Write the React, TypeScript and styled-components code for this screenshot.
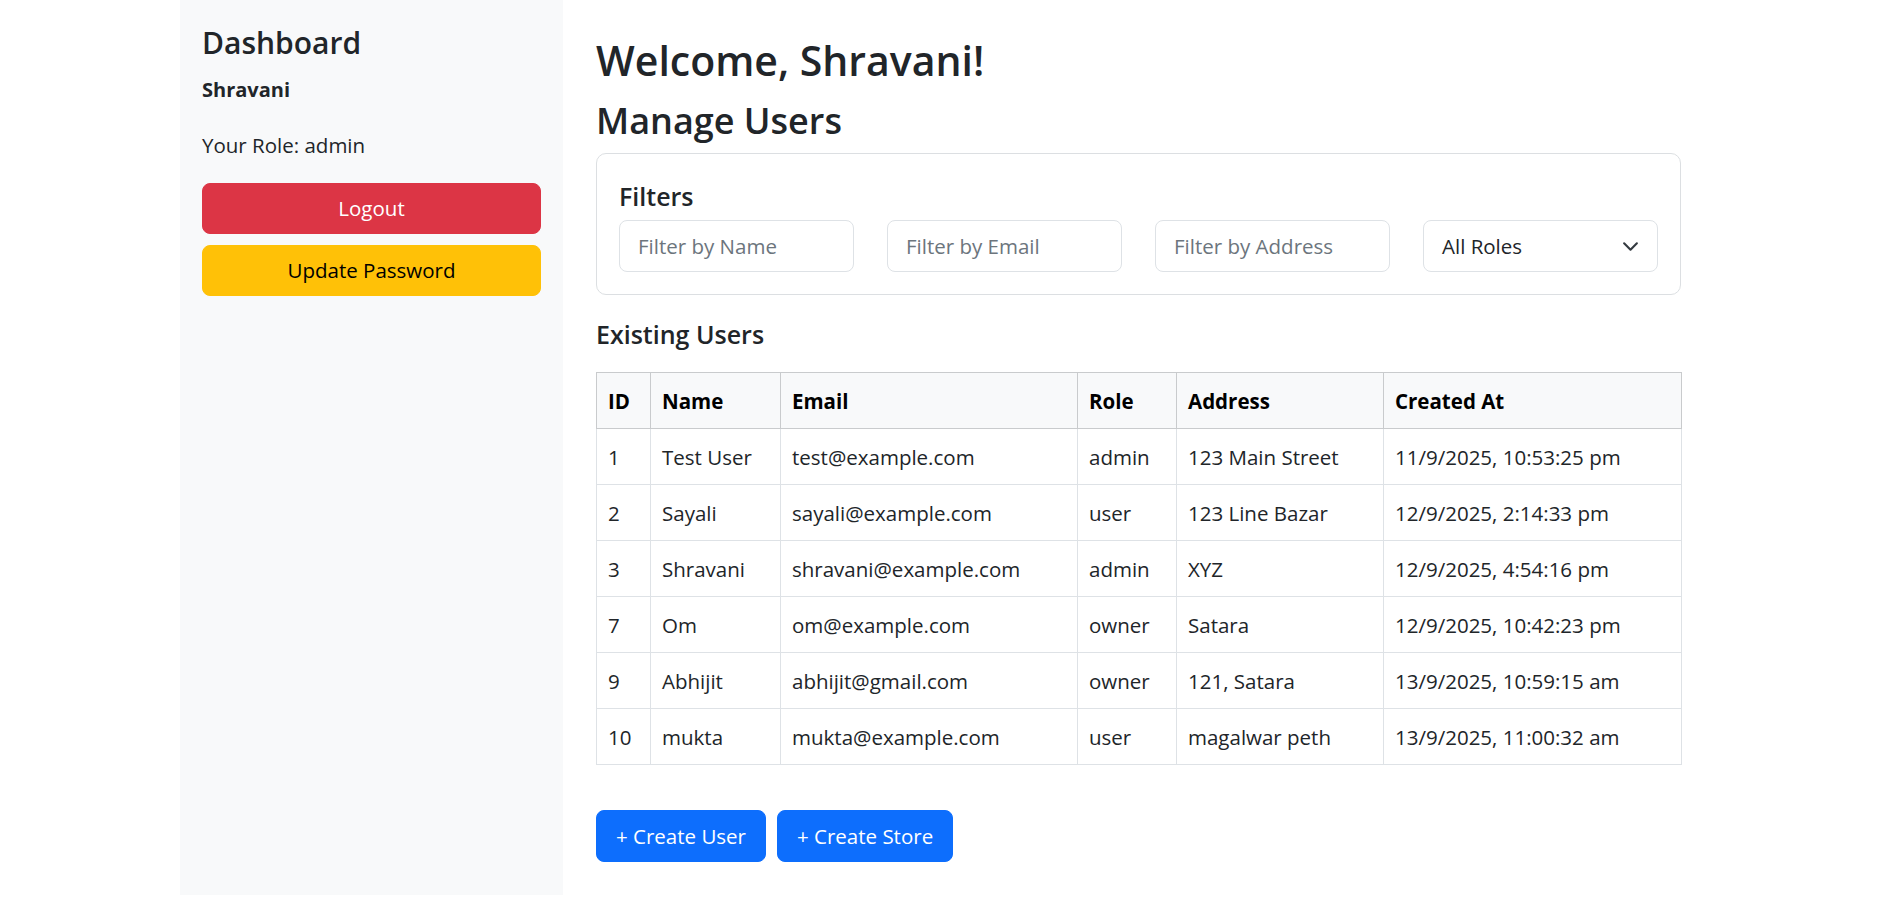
import React from "react";
import styled, { createGlobalStyle } from "styled-components";

const GlobalStyle = createGlobalStyle`
  * { box-sizing: border-box; }
  body {
    margin: 0;
    background: #fff;
    color: #212529;
    font-family: "Open Sans", "Noto Sans", Arial, sans-serif;
    font-size: 20.5px;
    line-height: 1.5;
  }
`;

const Page = styled.div`
  display: flex;
  align-items: stretch;
  padding-left: 180px;
`;

const Sidebar = styled.aside`
  width: 383px;
  flex: none;
  background: #f8f9fa;
  padding: 25px 22px;
  display: flex;
  flex-direction: column;
`;

const SideTitle = styled.h4`
  margin: 0 0 17px;
  font-size: 30px;
  font-weight: 600;
  line-height: 1.2;
`;

const SideUser = styled.h6`
  margin: 0 0 28px;
  font-size: 20px;
  font-weight: 700;
  line-height: 1.2;
`;

const SideRole = styled.p`
  margin: 0 0 22px;
`;

const Btn = styled.button<{ $variant: "danger" | "warning" | "primary" }>`
  font-family: inherit;
  font-size: 20.5px;
  line-height: 1.5;
  border: 1px solid transparent;
  border-radius: 8px;
  cursor: pointer;
  background: ${(p) =>
    p.$variant === "danger" ? "#dc3545" : p.$variant === "warning" ? "#ffc107" : "#0d6efd"};
  border-color: ${(p) =>
    p.$variant === "danger" ? "#dc3545" : p.$variant === "warning" ? "#ffc107" : "#0d6efd"};
  color: ${(p) => (p.$variant === "warning" ? "#000" : "#fff")};
`;

const SideButton = styled(Btn)`
  width: 100%;
  height: 51px;
  padding: 0 15px;
  & + & { margin-top: 11px; }
`;

const Main = styled.main`
  width: 1151px;
  flex: none;
  padding: 36px 33px 33px;
`;

const Welcome = styled.h2`
  margin: 0 0 14px;
  font-size: 41px;
  font-weight: 600;
  line-height: 1.2;
`;

const SectionTitle = styled.h3`
  margin: 0 0 11px;
  font-size: 36px;
  font-weight: 600;
  line-height: 1.2;
`;

const Card = styled.section`
  border: 1px solid #dcdfe2;
  border-radius: 10px;
  padding: 27px 22px 22px;
  background: #fff;
`;

const CardTitle = styled.h5`
  margin: 0 0 9px;
  font-size: 25px;
  font-weight: 600;
  line-height: 1.2;
`;

const FilterGrid = styled.div`
  display: grid;
  grid-template-columns: repeat(4, 1fr);
  column-gap: 33px;
`;

const Field = styled.input`
  width: 100%;
  height: 52px;
  border: 1px solid #dee2e6;
  border-radius: 8px;
  padding: 0 18px;
  font-family: inherit;
  font-size: 20.5px;
  color: #212529;
  background: #fff;
  outline: none;
  &::placeholder { color: #6c757d; }
`;

const SelectBox = styled.div`
  height: 52px;
  border: 1px solid #dee2e6;
  border-radius: 8px;
  padding: 0 18px;
  display: flex;
  align-items: center;
  justify-content: space-between;
  background: #fff;
  color: #212529;
`;

const SubTitle = styled.h5`
  margin: 24px 0 23px;
  font-size: 25px;
  font-weight: 600;
  line-height: 1.2;
`;

const Table = styled.table`
  width: 100%;
  border-collapse: collapse;
  table-layout: fixed;
`;

const Th = styled.th`
  background: #f8f9fa;
  color: #000;
  font-weight: 700;
  text-align: left;
  padding: 12px 11px;
  height: 56px;
  border: 1px solid #c9cbcd;
  line-height: 1.5;
`;

const Td = styled.td`
  padding: 12px 11px;
  height: 56px;
  border: 1px solid #dee2e6;
  color: #212529;
  white-space: nowrap;
  line-height: 1.5;
`;

const Actions = styled.div`
  display: flex;
  gap: 11px;
  margin-top: 45px;
`;

const ActionButton = styled(Btn)`
  height: 52px;
  padding: 0 19px;
`;

const Chevron = () => (
  <svg width="17" height="17" viewBox="0 0 16 16" fill="none">
    <path d="M2 5l6 6 6-6" stroke="#343a40" strokeWidth="2" strokeLinecap="round" strokeLinejoin="round" />
  </svg>
);

const users = [
  { id: 1, name: "Test User", email: "test@example.com", role: "admin", address: "123 Main Street", created: "11/9/2025, 10:53:25 pm" },
  { id: 2, name: "Sayali", email: "sayali@example.com", role: "user", address: "123 Line Bazar", created: "12/9/2025, 2:14:33 pm" },
  { id: 3, name: "Shravani", email: "shravani@example.com", role: "admin", address: "XYZ", created: "12/9/2025, 4:54:16 pm" },
  { id: 7, name: "Om", email: "om@example.com", role: "owner", address: "Satara", created: "12/9/2025, 10:42:23 pm" },
  { id: 9, name: "Abhijit", email: "abhijit@gmail.com", role: "owner", address: "121, Satara", created: "13/9/2025, 10:59:15 am" },
  { id: 10, name: "mukta", email: "mukta@example.com", role: "user", address: "magalwar peth", created: "13/9/2025, 11:00:32 am" },
];

const colWidths = [54, 130, 297, 99, 207, 298];

export default function App() {
  return (
    <>
      <GlobalStyle />
      <Page>
        <Sidebar>
          <SideTitle>Dashboard</SideTitle>
          <SideUser>Shravani</SideUser>
          <SideRole>Your Role: admin</SideRole>
          <SideButton $variant="danger">Logout</SideButton>
          <SideButton $variant="warning">Update Password</SideButton>
        </Sidebar>
        <Main>
          <Welcome>Welcome, Shravani!</Welcome>
          <SectionTitle>Manage Users</SectionTitle>
          <Card>
            <CardTitle>Filters</CardTitle>
            <FilterGrid>
              <Field placeholder="Filter by Name" />
              <Field placeholder="Filter by Email" />
              <Field placeholder="Filter by Address" />
              <SelectBox>
                <span>All Roles</span>
                <Chevron />
              </SelectBox>
            </FilterGrid>
          </Card>
          <SubTitle>Existing Users</SubTitle>
          <Table>
            <colgroup>
              {colWidths.map((w, i) => (
                <col key={i} style={{ width: w }} />
              ))}
            </colgroup>
            <thead>
              <tr>
                <Th>ID</Th>
                <Th>Name</Th>
                <Th>Email</Th>
                <Th>Role</Th>
                <Th>Address</Th>
                <Th>Created At</Th>
              </tr>
            </thead>
            <tbody>
              {users.map((u) => (
                <tr key={u.id}>
                  <Td>{u.id}</Td>
                  <Td>{u.name}</Td>
                  <Td>{u.email}</Td>
                  <Td>{u.role}</Td>
                  <Td>{u.address}</Td>
                  <Td>{u.created}</Td>
                </tr>
              ))}
            </tbody>
          </Table>
          <Actions>
            <ActionButton $variant="primary">+ Create User</ActionButton>
            <ActionButton $variant="primary">+ Create Store</ActionButton>
          </Actions>
        </Main>
      </Page>
    </>
  );
}
